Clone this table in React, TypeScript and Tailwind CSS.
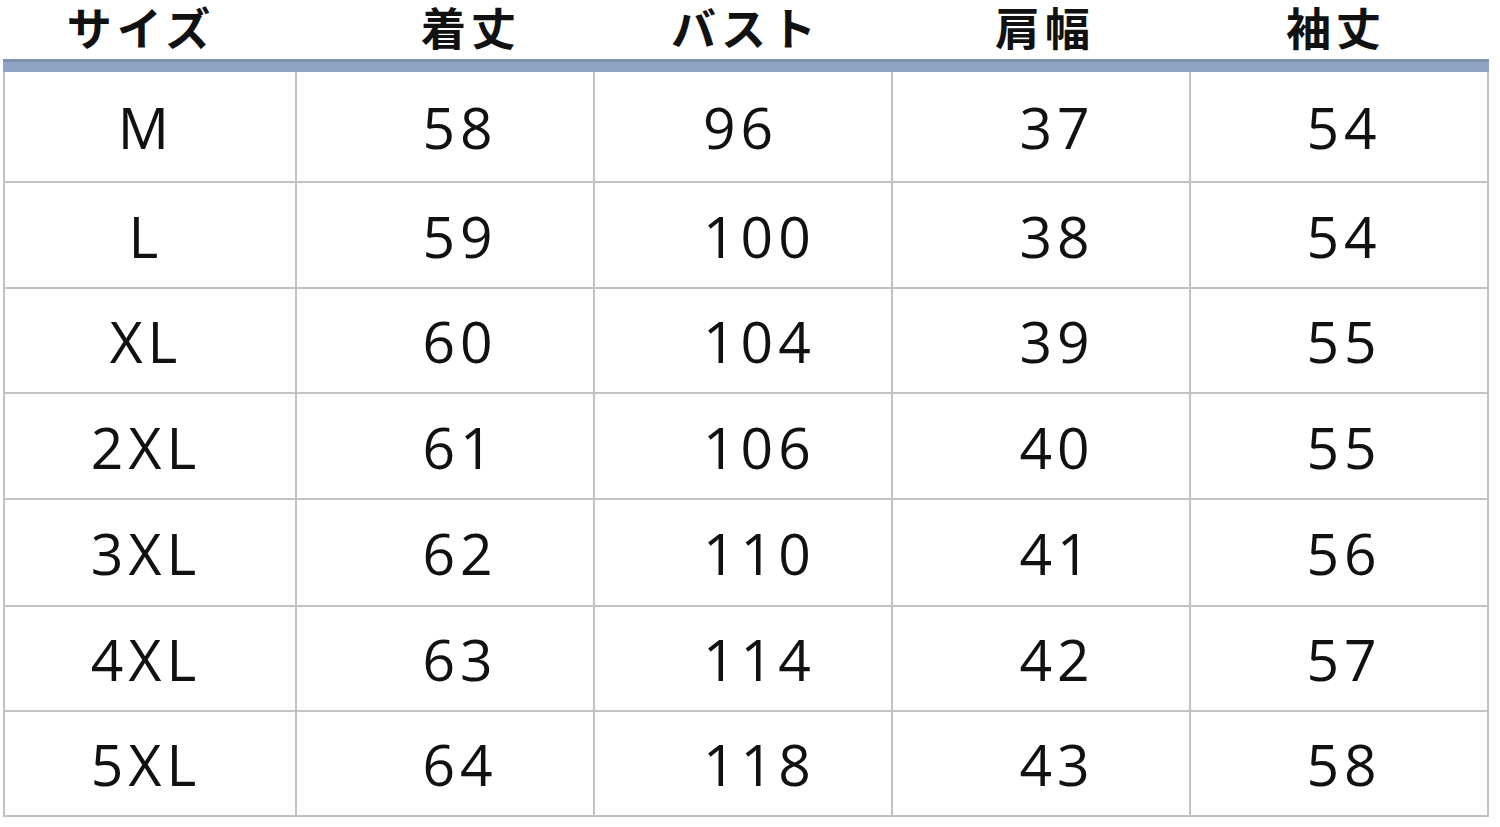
const headers = [
  { label: "サイズ", cls: "pr-[18px]" },
  { label: "着丈", cls: "pl-[50px]" },
  { label: "バスト", cls: "pl-[4px]" },
  { label: "肩幅", cls: "pl-[6px]" },
  { label: "袖丈", cls: "pr-[8px]" },
];

const rows = [
  { size: "M", values: ["58", "96", "37", "54"], h: "h-[111px]" },
  { size: "L", values: ["59", "100", "38", "54"], h: "h-[106px]" },
  { size: "XL", values: ["60", "104", "39", "55"], h: "h-[105px]" },
  { size: "2XL", values: ["61", "106", "40", "55"], h: "h-[106px]" },
  { size: "3XL", values: ["62", "110", "41", "56"], h: "h-[107px]" },
  { size: "4XL", values: ["63", "114", "42", "57"], h: "h-[105px]" },
  { size: "5XL", values: ["64", "118", "43", "58"], h: "h-[105px]" },
];

// per-column alignment: the source chart isn't perfectly centered
const cellAlign = [
  "justify-center pr-[8px]",
  "justify-center pl-[30px]",
  "justify-start pl-[108px]",
  "justify-center pl-[32px]",
  "justify-center pl-[10px]",
];

export default function App() {
  return (
    <div
      className="w-[1500px] h-[827px] bg-white text-[#111] overflow-hidden"
      style={{ fontFamily: '"Open Sans", "Noto Sans CJK JP", sans-serif' }}
    >
      <div className="ml-[3px] w-[1486px] h-[59px] grid grid-cols-[294px_298px_298px_298px_298px]">
        {headers.map((h) => (
          <div
            key={h.label}
            className={`flex items-start justify-center text-[45px] font-bold tracking-[5px] leading-[54px] ${h.cls}`}
            style={{ fontFamily: '"Noto Sans CJK JP", sans-serif' }}
          >
            {h.label}
          </div>
        ))}
      </div>

      <div className="ml-[3px] w-[1486px] h-[13px] bg-[#90a5c3] border-t-[3px] border-[#7d92b1]" />

      <div className="ml-[3px] w-[1486px] border-l-2 border-[#c2c2c2]">
        {rows.map((r) => (
          <div
            key={r.size}
            className={`grid grid-cols-[292px_298px_298px_298px_298px] ${r.h}`}
          >
            {[r.size, ...r.values].map((v, i) => (
              <div
                key={i}
                className={`flex items-center pt-[2px] border-r-2 border-b-2 border-[#c2c2c2] text-[57px] tracking-[5px] leading-none ${cellAlign[i]}`}
              >
                {v}
              </div>
            ))}
          </div>
        ))}
      </div>
    </div>
  );
}
